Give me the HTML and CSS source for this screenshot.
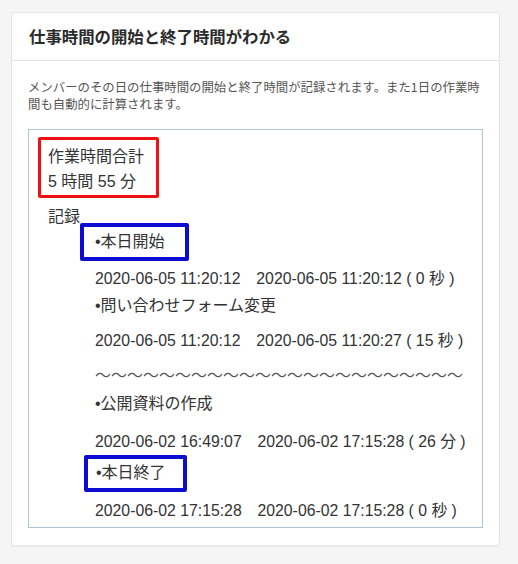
FILE: index.html
```html
<!DOCTYPE html>
<html lang="ja">
<head>
    <meta charset="UTF-8">
    <meta name="viewport" content="width=device-width, initial-scale=1.0">
    <title>仕事時間の開始と終了時間がわかる</title>
    <link rel="stylesheet" href="styles.css">
</head>
<body>

    <div class="card">
        <div class="card-head">
            <h2 class="card-title">仕事時間の開始と終了時間がわかる</h2>
        </div>
        <div class="card-body">
            <p class="desc">メンバーのその日の仕事時間の開始と終了時間が記録されます。また1日の作業時間も自動的に計算されます。</p>

            <div class="shot">
                <div class="total mark-red">
                    <div class="line">作業時間合計</div>
                    <div class="line">5 時間 55 分</div>
                </div>
                <div class="log-title">記録</div>
                <div class="log">
                    <div class="mark-blue first">•本日開始</div>
                    <div class="time t1">2020-06-05 11:20:12　2020-06-05 11:20:12 ( 0 秒 )</div>
                    <div class="item i2">•問い合わせフォーム変更</div>
                    <div class="time t2">2020-06-05 11:20:12　2020-06-05 11:20:27 ( 15 秒 )</div>
                    <div class="wave">〜〜〜〜〜〜〜〜〜〜〜〜〜〜〜〜〜〜〜〜〜〜〜</div>
                    <div class="item i3">•公開資料の作成</div>
                    <div class="time t3">2020-06-02 16:49:07　2020-06-02 17:15:28 ( 26 分 )</div>
                    <div class="mark-blue last">•本日終了</div>
                    <div class="time t4">2020-06-02 17:15:28　2020-06-02 17:15:28 ( 0 秒 )</div>
                </div>
            </div>
        </div>
    </div>

</body>
</html>
```

FILE: styles.css
```css
body {
    margin: 0;
    padding: 12px 18px 16px 11px;
    background-color: #f5f5f5;
    font-family: "Noto Sans CJK JP", "Liberation Sans", sans-serif;
    color: #333;
}
.card {
    background-color: #fff;
    border: 1px solid #e4e4e4;
    border-radius: 3px;
    box-shadow: 0 1px 2px rgba(0, 0, 0, 0.04);
}
.card-head {
    border-bottom: 1px solid #e6e6e6;
    padding: 0 17px;
}
.card-title {
    margin: 0;
    font-size: 16.4px;
    font-weight: bold;
    line-height: 46px;
    padding-bottom: 1px;
    color: #2b2b2b;
}
.card-body {
    padding: 18px 16px 17px 16px;
}
.desc {
    margin: 0;
    font-size: 12.4px;
    line-height: 17px;
    color: #555;
}

/* screenshot of the work log */
.shot {
    margin-top: 16px;
    border: 1px solid #aec6cf;
    padding: 7px 9px 4px;
    font-family: "Liberation Sans", "Noto Sans CJK JP", sans-serif;
    font-size: 16px;
    color: #333;
}
.mark-red {
    width: fit-content;
    border: 3px solid #ee1111;
    border-radius: 2px;
    padding: 4px 12px 1px 7px;
}
.total .line {
    line-height: 25px;
}
.log-title {
    margin: 13px 0 0 10px;
    line-height: 12px;
}
.log {
    padding-left: 57px;
}
.mark-blue {
    width: fit-content;
    border: 4px solid #0c0cd2;
    border-radius: 2px;
}
.mark-blue.first {
    margin-left: -15px;
    padding: 0 20px 0 11px;
    line-height: 30px;
}
.mark-blue.last {
    margin: 1px 0 0 -11px;
    padding: 0 17px 2px 8px;
    line-height: 27px;
}
.item,
.time,
.wave {
    line-height: 24px;
}
.time {
    font-size: 15.8px;
}
.wave {
    color: #555;
}
.t1 { margin-top: 6px; }
.i2 { margin-top: 3px; }
.t2 { margin-top: 11px; }
.wave { margin-top: 11px; }
.i3 { margin-top: 4px; }
.t3 { margin-top: 14px; }
.t4 { margin-top: 7px; }
```
